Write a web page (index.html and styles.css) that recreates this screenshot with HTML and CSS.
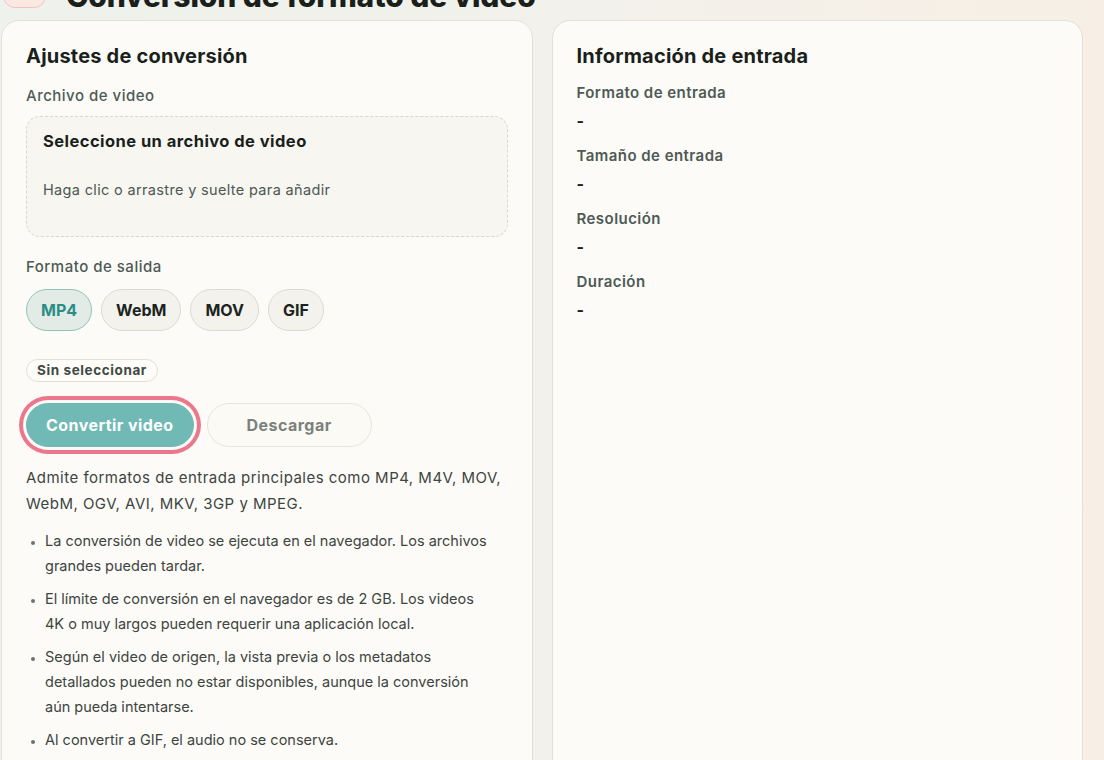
FILE: index.html
```html
<!DOCTYPE html>
<html lang="es">
<head>
<meta charset="utf-8">
<title>Conversión de formato de video</title>
<link rel="stylesheet" href="styles.css">
</head>
<body>
<div class="page">
  <header class="hero">
    <div class="hero-icon"></div>
    <h1 class="hero-title">Conversión de formato de video</h1>
  </header>
  <main class="grid">
    <section class="card">
      <h2 class="card-title">Ajustes de conversión</h2>
      <div class="field-label">Archivo de video</div>
      <div class="dropzone">
        <div class="dz-title">Seleccione un archivo de video</div>
        <div class="dz-hint">Haga clic o arrastre y suelte para añadir</div>
      </div>
      <div class="field-label field-label--gap">Formato de salida</div>
      <div class="chips">
        <button class="chip chip--active">MP4</button>
        <button class="chip">WebM</button>
        <button class="chip">MOV</button>
        <button class="chip">GIF</button>
      </div>
      <div class="badge">Sin seleccionar</div>
      <div class="actions">
        <button class="btn btn--primary">Convertir video</button>
        <button class="btn btn--ghost">Descargar</button>
      </div>
      <p class="note">Admite formatos de entrada principales como MP4, M4V, MOV, WebM, OGV, AVI, MKV, 3GP y MPEG.</p>
      <ul class="notes">
        <li>La conversión de video se ejecuta en el navegador. Los archivos grandes pueden tardar.</li>
        <li>El límite de conversión en el navegador es de 2 GB. Los videos 4K o muy largos pueden requerir una aplicación local.</li>
        <li>Según el video de origen, la vista previa o los metadatos detallados pueden no estar disponibles, aunque la conversión aún pueda intentarse.</li>
        <li>Al convertir a GIF, el audio no se conserva.</li>
      </ul>
    </section>
    <section class="card">
      <h2 class="card-title">Información de entrada</h2>
      <dl class="info">
        <div class="info-item"><dt>Formato de entrada</dt><dd>-</dd></div>
        <div class="info-item"><dt>Tamaño de entrada</dt><dd>-</dd></div>
        <div class="info-item"><dt>Resolución</dt><dd>-</dd></div>
        <div class="info-item"><dt>Duración</dt><dd>-</dd></div>
      </dl>
    </section>
  </main>
</div>
</body>
</html>
```

FILE: styles.css
```css
* { box-sizing: border-box; }

html, body {
  margin: 0;
  padding: 0;
  height: 100%;
  overflow: hidden;
}

body {
  font-family: Inter, "Noto Sans", "Liberation Sans", sans-serif;
  color: #1c2320;
  background: linear-gradient(90deg, #eef1ec 0%, #f2f1eb 50%, #f7efe5 100%);
}

.page {
  width: 1082px;
  margin-left: 1px;
  margin-top: -36px;
}

.hero {
  display: flex;
  align-items: flex-end;
  gap: 20px;
  height: 44px;
  margin-left: 2px;
  margin-bottom: 12px;
}

.hero-icon {
  width: 43px;
  height: 45px;
  border-radius: 12px;
  background: #fbe8e3;
  border: 1px solid #f1c3bd;
}

.hero-title {
  margin: 0;
  font-size: 30px;
  line-height: 1;
  font-weight: 800;
  color: #1a1f1c;
  letter-spacing: -0.1px;
  position: relative;
  top: 3px;
}

.grid {
  display: grid;
  grid-template-columns: 1fr 1fr;
  gap: 19px;
  height: 800px;
}

.card {
  background: #fcfbf7;
  border: 1px solid #e3e0d8;
  border-radius: 18px;
  padding: 22px 24px 24px;
}

.card-title {
  margin: 0;
  font-size: 20px;
  line-height: 26px;
  font-weight: 700;
  letter-spacing: 0.2px;
  color: #1a1f1c;
}

.field-label {
  margin-top: 16px;
  font-size: 15px;
  line-height: 22px;
  font-weight: 500;
  letter-spacing: 0.5px;
  color: #4d5a55;
}

.field-label--gap { margin-top: 19px; }

.dropzone {
  margin-top: 9px;
  height: 121px;
  border: 1px dashed #d9d8d0;
  border-radius: 14px;
  background: #f7f6f1;
  padding: 12px 16px;
}

.dz-title {
  font-size: 16.5px;
  line-height: 24px;
  font-weight: 700;
  letter-spacing: 0.45px;
  color: #1a1f1c;
}

.dz-hint {
  margin-top: 26px;
  font-size: 14.5px;
  line-height: 22px;
  letter-spacing: 0.34px;
  color: #4d5853;
}

.chips {
  display: flex;
  gap: 9px;
  margin-top: 11px;
}

.chip {
  height: 42px;
  padding: 0 14px;
  border-radius: 21px;
  border: 1px solid #dcdbd4;
  background: #f3f2ed;
  font-family: inherit;
  font-size: 16px;
  font-weight: 700;
  color: #1c2320;
}

.chip--active {
  background: #e2ebe6;
  border-color: #93c3bd;
  color: #2a8e87;
}

.badge {
  display: inline-block;
  margin-top: 28px;
  height: 23px;
  padding: 0 10px;
  border: 1px solid #e1dfd7;
  border-radius: 12px;
  background: #fdfcf8;
  font-size: 13.5px;
  line-height: 21px;
  font-weight: 700;
  letter-spacing: 0.6px;
  color: #3e4a45;
}

.actions {
  display: flex;
  gap: 13px;
  margin-top: 21px;
}

.btn {
  height: 44px;
  min-width: 165px;
  padding: 0 19px;
  border-radius: 22px;
  font-family: inherit;
  font-size: 16px;
  font-weight: 700;
  letter-spacing: 0.45px;
}

.btn--primary {
  background: #71b9b4;
  border: 1px solid #71b9b4;
  color: #ffffff;
  box-shadow: 0 0 0 3px #fdf9f6, 0 0 0 7px #ec778c;
}

.btn--ghost {
  background: #fbfaf5;
  border: 1px solid #e7e5dd;
  color: #7a817d;
}

.note {
  margin: 18px 0 0;
  font-size: 15px;
  line-height: 26px;
  letter-spacing: 0.48px;
  color: #3d4541;
}

.notes {
  margin: 11px 0 0;
  padding: 0 14px 0 19px;
  font-size: 14.5px;
  line-height: 25px;
  color: #3d4541;
}

.notes li { margin-bottom: 8px; }
.notes li::marker { color: #6c736f; font-size: 11px; }

.info { margin: 13px 0 0; }

.info-item { margin-bottom: 12px; }

.info dt {
  font-size: 15px;
  line-height: 22px;
  font-weight: 600;
  letter-spacing: 0.45px;
  color: #4d5a55;
}

.info dd {
  margin: 5px 0 0;
  font-size: 16px;
  line-height: 24px;
  font-weight: 700;
  color: #1a1f1c;
}
```
